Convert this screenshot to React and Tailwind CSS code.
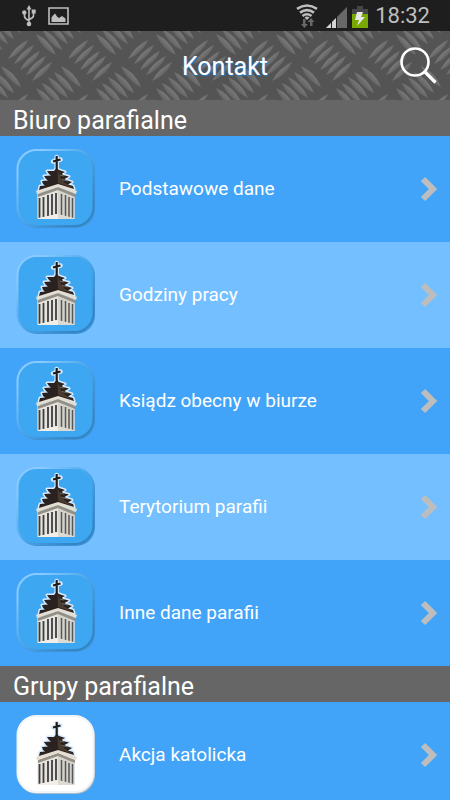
import React from "react";

function Plate() {
  return (
    <svg className="absolute inset-0 h-full w-full" aria-hidden="true">
      <defs>
        <linearGradient id="shadeUp" x1="0" y1="0" x2="1" y2="1">
          <stop offset="0.45" stopColor="#777777" />
          <stop offset="0.65" stopColor="#5e5e5e" />
        </linearGradient>
        <linearGradient id="shadeDown" x1="1" y1="0" x2="0" y2="1">
          <stop offset="0.45" stopColor="#747474" />
          <stop offset="0.65" stopColor="#5e5e5e" />
        </linearGradient>
        <path id="ridgeUp" d="M0 20Q7 7 20 1Q15 14 0 20Z" fill="url(#shadeUp)" />
        <path id="ridgeDown" d="M0 0Q14 6 20 21Q6 15 0 0Z" fill="url(#shadeDown)" />
        <g id="groupUp">
          <use href="#ridgeUp" />
          <use href="#ridgeUp" x="6" y="5" />
          <use href="#ridgeUp" x="12" y="11" />
          <use href="#ridgeUp" x="18" y="16" />
          <use href="#ridgeUp" x="24" y="22" />
        </g>
        <g id="groupDown">
          <use href="#ridgeDown" y="22" />
          <use href="#ridgeDown" x="6" y="17" />
          <use href="#ridgeDown" x="12" y="11" />
          <use href="#ridgeDown" x="18" y="6" />
          <use href="#ridgeDown" x="25" />
        </g>
        <pattern id="plate" width="60" height="54" patternUnits="userSpaceOnUse">
          <use href="#groupUp" x="8" y="8" />
          <use href="#groupDown" x="36" y="-19" />
          <use href="#groupDown" x="-24" y="-19" />
          <use href="#groupDown" x="36" y="35" />
          <use href="#groupDown" x="-24" y="35" />
        </pattern>
      </defs>
      <rect width="100%" height="100%" fill="#545454" />
      <rect width="100%" height="100%" fill="url(#plate)" />
    </svg>
  );
}

function StatusBar() {
  return (
    <div className="flex h-[31px] items-center bg-[#1e1e1e] pl-[22px] pr-5 text-[#bebebe]">
      <svg width="14" height="22" viewBox="0 0 14 22" fill="none" stroke="currentColor" strokeWidth="1.6">
        <path d="M7 3V19M2.500 8V11.500Q3 14 7 15.500M11.500 7V11Q11 13 7 14.500" />
        <path d="M7 0L9.500 4.500H4.500Z" fill="currentColor" stroke="none" />
        <circle cx="2.300" cy="7.500" r="2.200" fill="currentColor" stroke="none" />
        <path d="M9.700 4.500h4v4h-4z" fill="currentColor" stroke="none" />
        <circle cx="7" cy="19" r="2.300" fill="currentColor" stroke="none" />
      </svg>
      <svg className="ml-3" width="21" height="18" viewBox="0 0 21 18">
        <path d="M1 1H20V17H1Z" fill="none" stroke="currentColor" strokeWidth="1.600" />
        <path d="M3.500 15V10.500L5 8.500L7 6.500L9 9.500L11 11L14 9L17.500 11.500V15Z" fill="currentColor" />
      </svg>
      <div className="grow" />
      <svg width="22" height="24" viewBox="0 0 22 24" fill="none" stroke="currentColor" strokeWidth="2.600">
        <path d="M1 4.800Q11 -1.800 21 4.800M4 8.600Q11 3.600 18 8.600M6.500 12Q11 8.500 15.500 12" />
        <path d="M8.500 13.500Q11 11.500 13.500 13.500L11 16Z" fill="currentColor" stroke="none" />
        <path d="M7 15h2.500v5H12L8.300 24L5 20H7ZM14 22v-4h-2.500L15 14l3.500 4H16.500v4Z" fill="#686868" stroke="none" />
      </svg>
      <svg className="ml-2" width="22" height="24" viewBox="0 0 22 24">
        <path d="M0 24L21 3V24Z" fill="#686868" />
        <path d="M0 24L10 14V24Z" fill="#d4d4d4" />
        <path d="M5.500 17V24M10.500 12V24" stroke="#1e1e1e" />
      </svg>
      <svg className="ml-1" width="16" height="24" viewBox="0 0 16 24">
        <path d="M5 2H11V5H16V24H0V5H5Z" fill="#464646" />
        <path d="M0 10H16V24H0Z" fill="#79a900" />
        <path d="M5 8H11L9 13H13L5 22L7 16H3Z" fill="#e8e8e8" />
      </svg>
      <time className="ml-[7px] font-[Roboto,sans-serif] text-[22px] leading-8">18:32</time>
    </div>
  );
}

const roof =
  "M40.700 19L38 22L31 22L33 25L35 26.500L28 27L30 30L32 31.500L26 32L27 35L29 36.500L24 37L23 41L42 35L58 40L57 37L52 35.500L56 33L50 31L48.500 30L53 27.500L47 26L46 24.500L49 23L43 21Z";

function Tower() {
  return (
    <g>
      <g fill="#d9ecff" stroke="#d9ecff" strokeWidth="3" strokeLinejoin="round" strokeLinecap="round">
        <path d={roof} />
        <path d="M40.700 8V20M37 12.500L44.500 10.500" strokeWidth="4.500" />
        <path d="M22 45H58V69H22Z" strokeWidth="2" strokeOpacity="0.6" />
      </g>
      <path d="M22 45L42 38V70H22Z" fill="#e6e3dc" />
      <path d="M42 38L58.500 45V70H42Z" fill="#d5d2cb" />
      <path d="M23.500 49V69M27.500 48V68M32 46V67M36 45V66M40 44V65" stroke="#3b3e42" strokeWidth="1.800" />
      <path d="M45.500 45V66M49.500 46V67M53 48V68M56.500 49V69" stroke="#55575a" strokeWidth="1.500" />
      <path d="M22 69L42 65V70H22Z" fill="#f1eee8" />
      <path d="M42 65L58 69V70H42Z" fill="#dedad2" />
      <path d="M22 45L42 38L59 45V48L42 41L22 48Z" fill="#948f84" />
      <path d="M20 42L42 34L61 42L60 45L42 38L21 45Z" fill="#e6dfd1" />
      <path d={roof} fill="#2a2220" />
      <path d="M41.500 20L43 24L45 29L49 34L57 39L42 34Z" fill="#4b3a2f" />
      <path d="M44 26L48 27M46 30.500L52 32" stroke="#756d5f" strokeWidth="1.200" />
      <path d="M40.700 7V21M37 12.500L44.500 10.500" stroke="#211d1a" strokeWidth="2.200" />
    </g>
  );
}

function AppIcon({ white }) {
  return (
    <svg className="h-20 w-20 shrink-0" viewBox="0 0 80 80" aria-hidden="true">
      <defs>
        <linearGradient id="bevel" x1="0" y1="0" x2="1" y2="1">
          <stop offset="0.15" stopColor="#8acbff" />
          <stop offset="0.5" stopColor="#4ba6ea" />
          <stop offset="0.85" stopColor="#3485c6" />
        </linearGradient>
      </defs>
      <rect x="2" y="2" width="77" height="77" rx="19" fill={white ? "#a9bccb" : "#3e93d6"} />
      <rect
        x="1.500"
        y="1"
        width="76"
        height="76"
        rx="19"
        fill={white ? "#fff" : "#3da7f1"}
        stroke={white ? "#f1f4f7" : "url(#bevel)"}
        strokeWidth="2"
      />
      <Tower />
    </svg>
  );
}

function Row({ label, light, white }) {
  return (
    <li>
      <button
        type="button"
        className={"flex h-[106px] w-full items-center pl-4 pr-3 text-left " + (light ? "bg-[#73bfff]" : "bg-[#42a4f8]")}
      >
        <AppIcon white={white} />
        <span className="ml-[23px] grow text-[19px] leading-6 text-white">{label}</span>
        <svg className="shrink-0" width="18" height="26" viewBox="0 0 18 26" fill="none" aria-hidden="true">
          <path d="M3 3L13 13L3 23" stroke="#bdbdbd" strokeWidth="6" />
        </svg>
      </button>
    </li>
  );
}

function Section({ title, rows }) {
  return (
    <section>
      <h2 className="h-9 bg-[#666] pl-[13px] text-[25px] leading-[42px] text-white">{title}</h2>
      <ul>
        {rows.map((row) => (
          <Row key={row.label} {...row} />
        ))}
      </ul>
    </section>
  );
}

const office = [
  { label: "Podstawowe dane" },
  { label: "Godziny pracy", light: true },
  { label: "Ksiądz obecny w biurze" },
  { label: "Terytorium parafii", light: true },
  { label: "Inne dane parafii" },
];

export default function App() {
  return (
    <div className="h-screen overflow-hidden bg-[#42a4f8] font-[Roboto,sans-serif]">
      <StatusBar />
      <header className="relative flex h-[69px] items-center justify-center">
        <Plate />
        <h1 className="relative pt-0.5 text-[25px] leading-8 text-white [text-shadow:1px_1px_1px_#1683d8]">Kontakt</h1>
        <button type="button" aria-label="Szukaj" className="absolute right-3 top-4">
          <svg width="38" height="38" viewBox="0 0 38 38" fill="none" stroke="#fff">
            <circle cx="15" cy="15" r="13.500" strokeWidth="2.600" />
            <path d="M25 25L35.500 35.500" strokeWidth="3.200" />
          </svg>
        </button>
      </header>
      <main>
        <Section title="Biuro parafialne" rows={office} />
        <Section title="Grupy parafialne" rows={[{ label: "Akcja katolicka", white: true }]} />
      </main>
    </div>
  );
}
